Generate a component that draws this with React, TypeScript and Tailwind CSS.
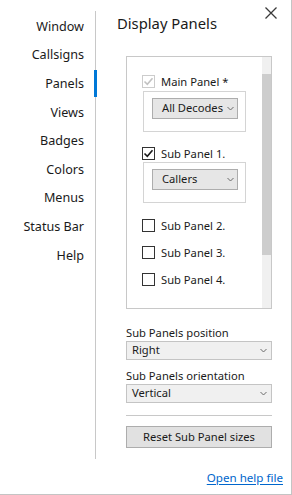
const navItems = ['Window', 'Callsigns', 'Panels', 'Views', 'Badges', 'Colors', 'Menus', 'Status Bar', 'Help'];

const font = { fontFamily: '"Noto Sans", "Open Sans", sans-serif' };

function Chevron() {
  return (
    <svg width="7" height="5" viewBox="0 0 7 5" className="shrink-0">
      <path d="M0.5 1 L3.5 4 L6.5 1" fill="none" stroke="#6b6b6b" strokeWidth="1" />
    </svg>
  );
}

function Check({ color }: { color: string }) {
  return (
    <svg width="11" height="11" viewBox="0 0 11 11">
      <path d="M1.5 5.5 L4.3 8.3 L9.5 2.3" fill="none" stroke={color} strokeWidth="1.6" />
    </svg>
  );
}

function CheckRow({ label, checked, disabled }: { label: string; checked?: boolean; disabled?: boolean }) {
  return (
    <div className="flex h-[13px] items-center gap-[6px]">
      <div
        className={`flex h-[13px] w-[13px] shrink-0 items-center justify-center border bg-white ${
          disabled ? 'border-[#cccccc]' : 'border-[#333333]'
        }`}
      >
        {checked && <Check color={disabled ? '#c2c2c2' : '#1a1a1a'} />}
      </div>
      <span className="whitespace-nowrap text-[11.2px] leading-[16px] text-[#1a1a1a]">{label}</span>
    </div>
  );
}

function PanelSelect({ value }: { value: string }) {
  return (
    <div className="ml-[1px] h-[41px] w-[103px] border border-[#d4d4d4] pl-[8px] pt-[6px]">
      <div className="flex h-[21px] w-[86px] items-center justify-between whitespace-nowrap border border-[#adadad] bg-[#e6e6e6] pl-[9px] pr-[3px] text-[11.2px] text-[#1a1a1a]">
        <span>{value}</span>
        <Chevron />
      </div>
    </div>
  );
}

function Select({ value }: { value: string }) {
  return (
    <div className="flex h-[19px] w-[146px] items-center justify-between border border-[#c4c4c4] bg-[#f0f0f0] pl-[5px] pr-[4px] text-[11.2px] text-[#1a1a1a]">
      <span>{value}</span>
      <Chevron />
    </div>
  );
}

export default function App() {
  return (
    <div style={font} className="flex h-[495px] w-[292px] border-b border-r border-[#c4c4c4] bg-white text-[#1a1a1a]">
      {/* Sidebar */}
      <div className="w-[96px] shrink-0">
        <div className="mt-[11px] h-[448px] border-r border-[#c8c8c8] pt-[1px]">
          {navItems.map((item) => (
            <div key={item} className="relative flex h-[28.6px] items-center justify-end pr-[11px] pt-[2px] text-[12.6px]">
              {item}
              {item === 'Panels' && <div className="absolute right-[-2px] top-[1px] h-[27px] w-[3px] bg-[#0078d7]" />}
            </div>
          ))}
        </div>
      </div>

      {/* Content */}
      <div className="relative flex-1">
        <button className="absolute right-[14px] top-[7px]">
          <svg width="12" height="12" viewBox="0 0 12 12">
            <path d="M0.5 0.5 L11.5 11.5 M11.5 0.5 L0.5 11.5" stroke="#3a3a3a" strokeWidth="1.3" />
          </svg>
        </button>
        <h1 className="pl-[21px] pt-[12px] text-[14.8px] leading-[22px]">Display Panels</h1>

        <div className="pl-[30px]">
          <div className="mt-[22px] flex h-[253px] w-[146px] border border-[#c8c8c8]">
            <div className="flex-1 pl-[15px] pt-[18px]">
              <CheckRow label="Main Panel *" checked disabled />
              <div className="mt-[3px]">
                <PanelSelect value="All Decodes" />
              </div>
              <div className="mt-[15px]">
                <CheckRow label="Sub Panel 1." checked />
              </div>
              <div className="mt-[2px]">
                <PanelSelect value="Callers" />
              </div>
              <div className="mt-[16px] flex flex-col gap-[14px]">
                <CheckRow label="Sub Panel 2." />
                <CheckRow label="Sub Panel 3." />
                <CheckRow label="Sub Panel 4." />
              </div>
            </div>
            <div className="w-[9px] bg-[#f0f0f0] pt-[17px]">
              <div className="h-[181px] bg-[#cdcdcd]" />
            </div>
          </div>

          <div className="mt-[16px] text-[11.2px] leading-[16px]">Sub Panels position</div>
          <Select value="Right" />
          <div className="mt-[8px] text-[11.2px] leading-[16px]">Sub Panels orientation</div>
          <Select value="Vertical" />

          <div className="mt-[12px] h-px w-[146px] bg-[#c8c8c8]" />

          <button className="mt-[10px] flex h-[22px] w-[146px] items-center justify-center border border-[#adadad] bg-[#e1e1e1] text-[11.2px] text-[#1a1a1a]">
            Reset Sub Panel sizes
          </button>
        </div>

        <div className="mt-[22px] flex justify-end pr-[8px]">
          <a className="text-[11.6px] leading-[16px] text-[#0066cc] underline underline-offset-2">Open help file</a>
        </div>
      </div>
    </div>
  );
}
